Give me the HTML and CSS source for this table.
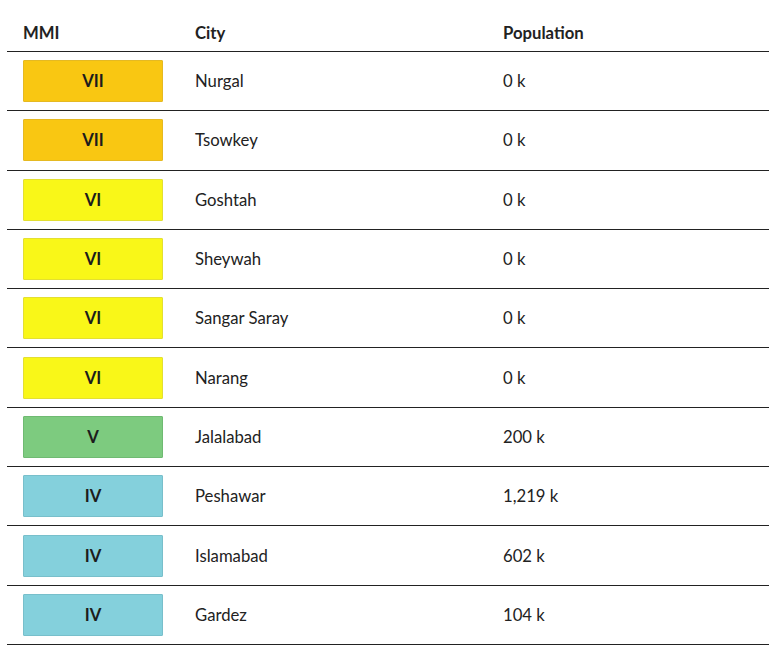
FILE: index.html
```html
<!DOCTYPE html>
<html>
<head>
<meta charset="utf-8">
<link rel="stylesheet" href="styles.css">
</head>
<body>
<div class="table">
  <div class="row head">
    <div class="c1">MMI</div>
    <div class="c2">City</div>
    <div class="c3">Population</div>
  </div>
  <div class="row"><div class="c1"><span class="mmi m7">VII</span></div><div class="c2">Nurgal</div><div class="c3">0 k</div></div>
  <div class="row"><div class="c1"><span class="mmi m7">VII</span></div><div class="c2">Tsowkey</div><div class="c3">0 k</div></div>
  <div class="row"><div class="c1"><span class="mmi m6">VI</span></div><div class="c2">Goshtah</div><div class="c3">0 k</div></div>
  <div class="row"><div class="c1"><span class="mmi m6">VI</span></div><div class="c2">Sheywah</div><div class="c3">0 k</div></div>
  <div class="row"><div class="c1"><span class="mmi m6">VI</span></div><div class="c2">Sangar Saray</div><div class="c3">0 k</div></div>
  <div class="row"><div class="c1"><span class="mmi m6">VI</span></div><div class="c2">Narang</div><div class="c3">0 k</div></div>
  <div class="row"><div class="c1"><span class="mmi m5">V</span></div><div class="c2">Jalalabad</div><div class="c3">200 k</div></div>
  <div class="row"><div class="c1"><span class="mmi m4">IV</span></div><div class="c2">Peshawar</div><div class="c3">1,219 k</div></div>
  <div class="row"><div class="c1"><span class="mmi m4">IV</span></div><div class="c2">Islamabad</div><div class="c3">602 k</div></div>
  <div class="row"><div class="c1"><span class="mmi m4">IV</span></div><div class="c2">Gardez</div><div class="c3">104 k</div></div>
</div>
</body>
</html>
```
FILE: styles.css
```css
html, body {
  margin: 0;
  padding: 0;
  background: #fff;
}
body {
  font-family: Lato, "Liberation Sans", sans-serif;
  font-size: 16.7px;
  color: #222;
  padding: 0 7px;
}
.table {
  display: flex;
  flex-direction: column;
  width: 762px;
}
.row {
  display: grid;
  grid-template-columns: 172px 308px 1fr;
  align-items: center;
  border-bottom: 1px solid #222;
  height: 58.3px;
}
.row > div {
  padding-left: 16px;
}
.row.head {
  height: 51px;
  align-items: start;
  font-weight: 700;
}
.row.head > div {
  padding-top: 21px;
  line-height: 24px;
}
.mmi {
  display: flex;
  align-items: center;
  justify-content: center;
  width: 140px;
  height: 42px;
  box-sizing: border-box;
  border: 1px solid;
  border-radius: 1px;
  font-weight: 700;
  color: #1c1c1c;
}
.m7 { background: #f9c712; border-color: #e5b922; }
.m6 { background: #f9f718; border-color: #e3df32; }
.m5 { background: #7dcb7f; border-color: #6fba72; }
.m4 { background: #84d0dc; border-color: #78bfcb; }
```
